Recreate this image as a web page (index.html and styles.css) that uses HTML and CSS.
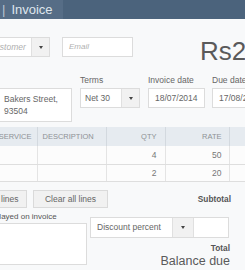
FILE: index.html
```html
<!DOCTYPE html>
<html>
<head>
<meta charset="utf-8">
<link rel="stylesheet" href="styles.css">
</head>
<body>
<div class="topbar"><span class="tab"><span class="sep">|</span>Invoice</span></div>
<div class="content">
  <div class="row1">
    <div class="combo cust"><span class="val ph">Customer</span><span class="arrow"><i></i></span></div>
    <div class="box email ph">Email</div>
    <div class="amount">Rs200.00</div>
  </div>
  <div class="row2">
    <div class="box address">Bakers Street,<br>93504</div>
    <div class="field terms">
      <div class="lbl">Terms</div>
      <div class="combo"><span class="val">Net 30</span><span class="arrow"><i></i></span></div>
    </div>
    <div class="field inv">
      <div class="lbl">Invoice date</div>
      <div class="box">18/07/2014</div>
    </div>
    <div class="field due">
      <div class="lbl">Due date</div>
      <div class="box">17/08/2014</div>
    </div>
  </div>
  <table class="lines">
    <colgroup>
      <col class="k1"><col class="k2"><col class="k3"><col class="k4"><col class="k5">
    </colgroup>
    <thead>
      <tr><th class="c1">Product/Service</th><th class="c2">Description</th><th class="num q">Qty</th><th class="num r">Rate</th><th></th></tr>
    </thead>
    <tbody>
      <tr class="r1"><td></td><td></td><td class="num q">4</td><td class="num r">50</td><td></td></tr>
      <tr class="r2"><td></td><td></td><td class="num q">2</td><td class="num r">20</td><td></td></tr>
    </tbody>
  </table>
  <div class="actions">
    <span class="btn add">Add lines</span>
    <span class="btn clear">Clear all lines</span>
    <span class="subtotal">Subtotal</span>
  </div>
  <div class="bottom">
    <div class="msg">
      <div class="msglbl">Message displayed on invoice</div>
      <div class="textarea"></div>
    </div>
    <div class="totals">
      <div class="discount">
        <span class="dval">Discount percent</span><span class="arrow"><i></i></span><span class="dinput"></span>
      </div>
      <div class="total">Total</div>
      <div class="balance">Balance due</div>
    </div>
  </div>
</div>
</body>
</html>
```
FILE: styles.css
```css
html, body {
  margin: 0;
  padding: 0;
  overflow: hidden;
  width: 245px;
  height: 270px;
  background: #f8f9fa;
  font-family: "Liberation Sans", Arial, sans-serif;
  color: #666;
}
.topbar {
  height: 19px;
  background: #4b637c;
  display: flex;
}
.tab {
  width: 63px;
  background: #566d86;
  color: #dfe6ed;
  font-size: 13px;
  line-height: 19px;
  white-space: nowrap;
}
.sep {
  margin-left: 2px;
  margin-right: 6px;
  color: #b9c6d3;
}
.content {
  padding-top: 18px;
}
.row1 {
  display: flex;
  align-items: flex-start;
  height: 35px;
}
.row1 > * { flex-shrink: 0; }
.combo {
  display: flex;
  height: 20px;
  box-sizing: border-box;
  border: 1px solid #dcdcdc;
  background: #fff;
}
.combo .val {
  flex: 1;
  font-size: 8.5px;
  line-height: 18px;
  padding-left: 4px;
  white-space: nowrap;
  overflow: hidden;
}
.arrow {
  width: 17px;
  background: #f1f1f1;
  border-left: 1px solid #e0e0e0;
  display: flex;
  align-items: center;
  justify-content: center;
}
.arrow i {
  display: block;
  width: 0;
  height: 0;
  border-left: 2.5px solid transparent;
  border-right: 2.5px solid transparent;
  border-top: 3px solid #444;
}
.ph {
  color: #b0b0b0;
  font-style: italic;
  font-size: 8px;
}
.cust {
  margin-left: -12px;
  width: 62px;
}
.cust .val { padding-left: 0; }
.box {
  box-sizing: border-box;
  border: 1px solid #dcdcdc;
  background: #fff;
  height: 20px;
  font-size: 8.5px;
  line-height: 18px;
  padding-left: 6px;
  white-space: nowrap;
  overflow: hidden;
}
.email {
  margin-left: 12px;
  width: 71px;
  font-size: 8px;
}
.amount {
  margin-left: 67px;
  margin-top: 1px;
  font-size: 26px;
  line-height: 26px;
  color: #5a5a5a;
  white-space: nowrap;
}
.row2 {
  display: flex;
  align-items: flex-start;
  height: 50px;
}
.row2 > * { flex-shrink: 0; }
.address {
  margin-top: 16px;
  margin-left: -6px;
  width: 78px;
  height: 34px;
  padding: 4px 0 0 9px;
  line-height: 12px;
  color: #666;
}
.field .lbl {
  font-size: 8.5px;
  line-height: 16px;
  color: #666;
  white-space: nowrap;
}
.terms {
  margin-left: 8px;
  width: 60px;
}
.inv {
  margin-left: 8px;
  width: 57px;
}
.due {
  margin-left: 7px;
  width: 60px;
}
.lines {
  margin-top: 5px;
  margin-left: -48px;
  border-collapse: collapse;
  table-layout: fixed;
  width: 317px;
  font-size: 8.5px;
}
.k1 { width: 85px; }
.k2 { width: 69px; }
.k3 { width: 59px; }
.k4 { width: 64px; }
.k5 { width: 40px; }
.lines th {
  background: #e6ebf0;
  height: 19px;
  padding: 0 4px;
  font-size: 7.5px;
  font-weight: normal;
  text-transform: uppercase;
  color: #8e9296;
  text-align: left;
  border-right: 1px solid #d3d9df;
  white-space: nowrap;
  overflow: hidden;
}
.lines td {
  background: #fcfcfc;
  border-bottom: 1px solid #dedede;
  border-right: 1px solid #e4e4e4;
  color: #777;
  padding: 0 4px;
}
.lines .r1 td { height: 18px; }
.lines .r2 td { height: 16px; }
.lines th.c1 { text-align: right; padding-right: 5px; }
.lines th.c2 { padding-left: 5px; }
.lines .num { text-align: right; }
.lines .q { padding-right: 8px; }
.lines .r { padding-right: 7px; }
.actions {
  display: flex;
  align-items: center;
  margin-top: 8px;
  height: 18px;
}
.btn {
  box-sizing: border-box;
  height: 18px;
  line-height: 16px;
  border: 1px solid #dadada;
  background: #f1f1f1;
  font-size: 8.5px;
  color: #666;
  text-align: center;
  white-space: nowrap;
  flex-shrink: 0;
}
.add {
  margin-left: -25px;
  width: 52px;
}
.clear {
  margin-left: 6px;
  width: 75px;
}
.subtotal {
  margin-left: auto;
  margin-right: 14px;
  font-size: 8.3px;
  font-weight: bold;
  color: #555;
}
.bottom {
  display: flex;
  align-items: flex-start;
  margin-top: 4px;
}
.msg {
  margin-left: -50px;
  width: 137px;
  flex-shrink: 0;
}
.msglbl {
  font-size: 8px;
  line-height: 10px;
  color: #555;
  white-space: nowrap;
}
.textarea {
  margin-top: 1px;
  height: 42px;
  box-sizing: border-box;
  border: 1px solid #dcdcdc;
  background: #fff;
}
.totals {
  margin-left: 3px;
  width: 140px;
  display: flex;
  flex-direction: column;
  align-items: flex-end;
}
.discount {
  margin-top: 5px;
  display: flex;
  width: 139px;
  height: 21px;
  box-sizing: border-box;
  border: 1px solid #dcdcdc;
  background: #fff;
  align-self: flex-start;
}
.dval {
  width: 81px;
  font-size: 8.5px;
  line-height: 19px;
  padding-left: 6px;
  box-sizing: border-box;
  color: #666;
  white-space: nowrap;
}
.discount .arrow { width: 20px; }
.dinput {
  flex: 1;
  border-left: 1px solid #e0e0e0;
}
.total {
  margin-top: 5px;
  font-size: 8.3px;
  line-height: 10px;
  font-weight: bold;
  color: #555;
}
.balance {
  margin-top: 1px;
  font-size: 12.5px;
  line-height: 14px;
  color: #5a5a5a;
}
```
